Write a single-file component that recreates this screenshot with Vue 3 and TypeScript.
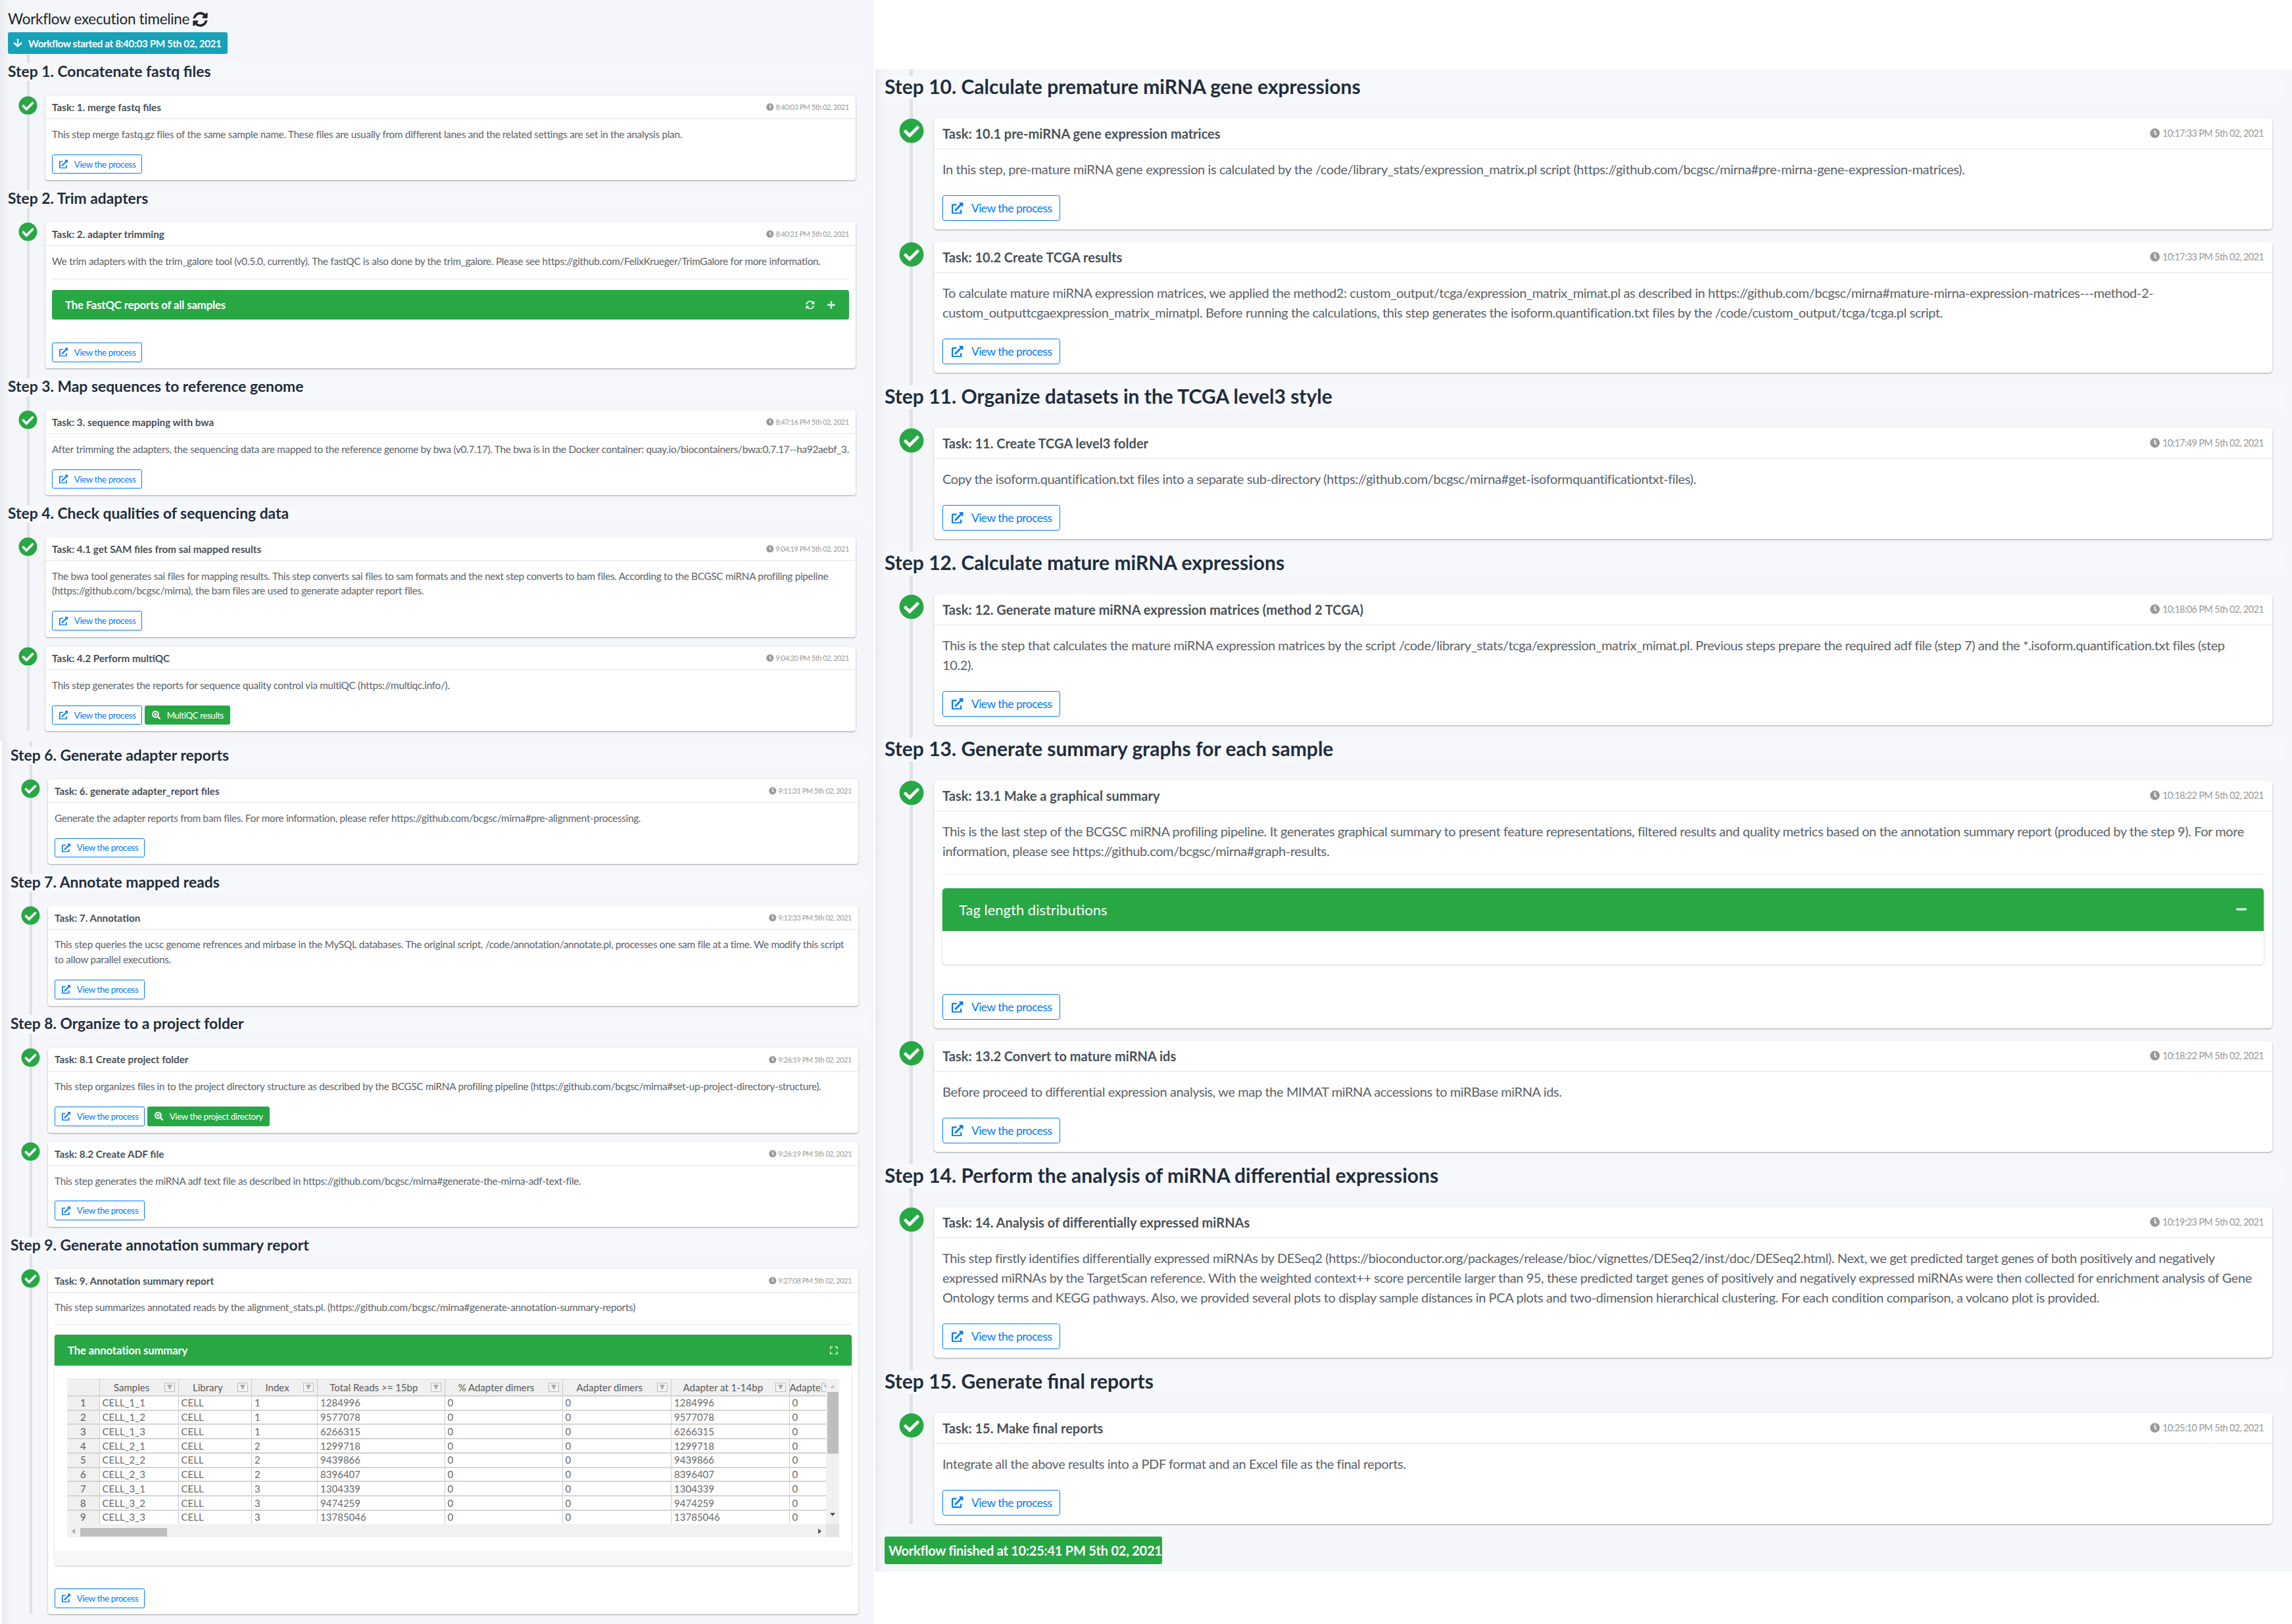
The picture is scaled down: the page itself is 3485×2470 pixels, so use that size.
<script setup lang="ts">
interface Panel { title: string; kind: 'fastqc' | 'annot' | 'tag' }
interface Task { title: string; time: string; text: string; panel?: Panel; extra?: string }
interface Step { title: string; tasks: Task[] }
interface Sheet { cls: string; steps: Step[]; intro?: boolean; end?: string }

const icons = {
  check: 'M504 256c0 136.967-111.033 248-248 248S8 392.967 8 256 119.033 8 256 8s248 111.033 248 248zM227.314 387.314l184-184c6.248-6.248 6.248-16.379 0-22.627l-22.627-22.627c-6.248-6.249-16.379-6.249-22.628 0L216 308.118l-70.059-70.059c-6.248-6.248-16.379-6.248-22.628 0l-22.627 22.627c-6.248 6.248-6.248 16.379 0 22.627l104 104c6.249 6.249 16.379 6.249 22.628.001z',
  ext: 'M432,320H400a16,16,0,0,0-16,16V448H64V128H208a16,16,0,0,0,16-16V80a16,16,0,0,0-16-16H48A48,48,0,0,0,0,112V464a48,48,0,0,0,48,48H400a48,48,0,0,0,48-48V336A16,16,0,0,0,432,320ZM488,0h-128c-21.37,0-32.05,25.91-17,41l35.73,35.73L135,320.37a24,24,0,0,0,0,34L157.67,377a24,24,0,0,0,34,0L435.28,133.32,471,169c15,15,41,4.5,41-17V24A24,24,0,0,0,488,0Z',
  sync: 'M370.72 133.28C339.458 104.008 298.888 87.962 255.848 88c-77.458.068-144.328 53.178-162.791 126.85-1.344 5.363-6.122 9.15-11.651 9.15H24.103c-7.498 0-13.194-6.807-11.807-14.176C33.933 94.924 134.813 8 256 8c66.448 0 126.791 26.136 171.315 68.685L463.03 40.97C478.149 25.851 504 36.559 504 57.941V192c0 13.255-10.745 24-24 24H345.941c-21.382 0-32.09-25.851-16.971-40.971l41.75-41.749zM32 296h134.059c21.382 0 32.09 25.851 16.971 40.971l-41.75 41.75c31.262 29.273 71.835 45.319 114.876 45.28 77.418-.07 144.315-53.144 162.787-126.849 1.344-5.363 6.122-9.15 11.651-9.15h57.304c7.498 0 13.194 6.807 11.807 14.176C478.067 417.076 377.187 504 256 504c-66.448 0-126.791-26.136-171.315-68.685L48.97 471.03C33.851 486.149 8 475.441 8 454.059V320c0-13.255 10.745-24 24-24z',
  clock: 'M256,8C119,8,8,119,8,256S119,504,256,504,504,393,504,256,393,8,256,8Zm92.49,313h0l-20,25a16,16,0,0,1-22.49,2.5h0l-67-49.72a40,40,0,0,1-15-31.23V112a16,16,0,0,1,16-16h32a16,16,0,0,1,16,16V256l58,42.5A16,16,0,0,1,348.49,321Z',
  down: 'M413.1 222.5l22.2 22.2c9.4 9.4 9.4 24.6 0 33.9L241 473c-9.4 9.4-24.6 9.4-33.9 0L12.7 278.6c-9.4-9.4-9.4-24.6 0-33.9l22.2-22.2c9.5-9.5 25-9.3 34.3.4L184 343.4V56c0-13.3 10.7-24 24-24h32c13.3 0 24 10.7 24 24v287.4l114.8-120.5c9.3-9.8 24.8-10 34.3-.4z',
  zoom: 'M304 192v32c0 6.6-5.4 12-12 12h-56v56c0 6.6-5.4 12-12 12h-32c-6.6 0-12-5.4-12-12v-56h-56c-6.6 0-12-5.4-12-12v-32c0-6.6 5.4-12 12-12h56v-56c0-6.6 5.4-12 12-12h32c6.6 0 12 5.4 12 12v56h56c6.6 0 12 5.4 12 12zm201 284.7L476.7 505c-9.4 9.4-24.6 9.4-33.9 0L343 405.3c-4.5-4.5-7-10.6-7-17V372c-35.3 27.6-79.7 44-128 44C93.1 416 0 322.9 0 208S93.1 0 208 0s208 93.1 208 208c0 48.3-16.4 92.7-44 128h16.3c6.4 0 12.5 2.5 17 7l99.7 99.7c9.3 9.4 9.3 24.6 0 34zM340 208c0-72.900-59.100-132-132-132S76 135.100 76 208s59.100 132 132 132 132-59.100 132-132z',
  plus: 'M416 208H272V64c0-17.67-14.33-32-32-32h-32c-17.67 0-32 14.33-32 32v144H32c-17.67 0-32 14.33-32 32v32c0 17.67 14.33 32 32 32h144v144c0 17.67 14.33 32 32 32h32c17.67 0 32-14.33 32-32V304h144c17.67 0 32-14.33 32-32v-32c0-17.67-14.33-32-32-32z',
  minus: 'M416 208H32c-17.67 0-32 14.33-32 32v32c0 17.67 14.33 32 32 32h384c17.67 0 32-14.33 32-32v-32c0-17.67-14.33-32-32-32z',
  expand: 'M0 180V56c0-13.3 10.7-24 24-24h124c6.6 0 12 5.4 12 12v40c0 6.6-5.4 12-12 12H64v84c0 6.6-5.4 12-12 12H12c-6.6 0-12-5.4-12-12zM288 44v40c0 6.6 5.4 12 12 12h84v84c0 6.6 5.4 12 12 12h40c6.6 0 12-5.4 12-12V56c0-13.3-10.7-24-24-24H300c-6.6 0-12 5.4-12 12zm148 276h-40c-6.6 0-12 5.4-12 12v84h-84c-6.6 0-12 5.4-12 12v40c0 6.6 5.4 12 12 12h124c13.3 0 24-10.7 24-24V332c0-6.6-5.4-12-12-12zM160 468v-40c0-6.6-5.4-12-12-12H64v-84c0-6.6-5.4-12-12-12H12c-6.6 0-12 5.4-12 12v124c0 13.3 10.7 24 24 24h124c6.6 0 12-5.4 12-12z'
}

const D = ' 5th 02, 2021'
const left: Sheet[] = [
  {
    cls: 'sheet-a',
    intro: true,
    steps: [
      { title: 'Step 1. Concatenate fastq files', tasks: [{ title: 'Task: 1. merge fastq files', time: '8:40:03 PM' + D, text: 'This step merge fastq.gz files of the same sample name. These files are usually from different lanes and the related settings are set in the analysis plan.' }] },
      { title: 'Step 2. Trim adapters', tasks: [{ title: 'Task: 2. adapter trimming', time: '8:40:21 PM' + D, text: 'We trim adapters with the trim_galore tool (v0.5.0, currently). The fastQC is also done by the trim_galore. Please see https://github.com/FelixKrueger/TrimGalore for more information.', panel: { title: 'The FastQC reports of all samples', kind: 'fastqc' } }] },
      { title: 'Step 3. Map sequences to reference genome', tasks: [{ title: 'Task: 3. sequence mapping with bwa', time: '8:47:16 PM' + D, text: 'After trimming the adapters, the sequencing data are mapped to the reference genome by bwa (v0.7.17). The bwa is in the Docker container: quay.io/biocontainers/bwa:0.7.17--ha92aebf_3.' }] },
      { title: 'Step 4. Check qualities of sequencing data', tasks: [
        { title: 'Task: 4.1 get SAM files from sai mapped results', time: '9:04:19 PM' + D, text: 'The bwa tool generates sai files for mapping results. This step converts sai files to sam formats and the next step converts to bam files. According to the BCGSC miRNA profiling pipeline\n(https://github.com/bcgsc/mirna), the bam files are used to generate adapter report files.' },
        { title: 'Task: 4.2 Perform multiQC', time: '9:04:20 PM' + D, text: 'This step generates the reports for sequence quality control via multiQC (https://multiqc.info/).', extra: 'MultiQC results' }
      ] }
    ]
  },
  {
    cls: 'sheet-b',
    steps: [
      { title: 'Step 6. Generate adapter reports', tasks: [{ title: 'Task: 6. generate adapter_report files', time: '9:11:31 PM' + D, text: 'Generate the adapter reports from bam files. For more information, please refer https://github.com/bcgsc/mirna#pre-alignment-processing.' }] },
      { title: 'Step 7. Annotate mapped reads', tasks: [{ title: 'Task: 7. Annotation', time: '9:12:33 PM' + D, text: 'This step queries the ucsc genome refrences and mirbase in the MySQL databases. The original script, /code/annotation/annotate.pl, processes one sam file at a time. We modify this script\nto allow parallel executions.' }] },
      { title: 'Step 8. Organize to a project folder', tasks: [
        { title: 'Task: 8.1 Create project folder', time: '9:26:19 PM' + D, text: 'This step organizes files in to the project directory structure as described by the BCGSC miRNA profiling pipeline (https://github.com/bcgsc/mirna#set-up-project-directory-structure).', extra: 'View the project directory' },
        { title: 'Task: 8.2 Create ADF file', time: '9:26:19 PM' + D, text: 'This step generates the miRNA adf text file as described in https://github.com/bcgsc/mirna#generate-the-mirna-adf-text-file.' }
      ] },
      { title: 'Step 9. Generate annotation summary report', tasks: [{ title: 'Task: 9. Annotation summary report', time: '9:27:08 PM' + D, text: 'This step summarizes annotated reads by the alignment_stats.pl. (https://github.com/bcgsc/mirna#generate-annotation-summary-reports)', panel: { title: 'The annotation summary', kind: 'annot' } }] }
    ]
  }
]
const right: Sheet = {
  cls: 'sheet-r',
  end: 'Workflow finished at 10:25:41 PM 5th 02, 2021',
  steps: [
    { title: 'Step 10. Calculate premature miRNA gene expressions', tasks: [
      { title: 'Task: 10.1 pre-miRNA gene expression matrices', time: '10:17:33 PM' + D, text: 'In this step, pre-mature miRNA gene expression is calculated by the /code/library_stats/expression_matrix.pl script (https://github.com/bcgsc/mirna#pre-mirna-gene-expression-matrices).' },
      { title: 'Task: 10.2 Create TCGA results', time: '10:17:33 PM' + D, text: 'To calculate mature miRNA expression matrices, we applied the method2: custom_output/tcga/expression_matrix_mimat.pl as described in https://github.com/bcgsc/mirna#mature-mirna-expression-matrices---method-2-\ncustom_outputtcgaexpression_matrix_mimatpl. Before running the calculations, this step generates the isoform.quantification.txt files by the /code/custom_output/tcga/tcga.pl script.' }
    ] },
    { title: 'Step 11. Organize datasets in the TCGA level3 style', tasks: [{ title: 'Task: 11. Create TCGA level3 folder', time: '10:17:49 PM' + D, text: 'Copy the isoform.quantification.txt files into a separate sub-directory (https://github.com/bcgsc/mirna#get-isoformquantificationtxt-files).' }] },
    { title: 'Step 12. Calculate mature miRNA expressions', tasks: [{ title: 'Task: 12. Generate mature miRNA expression matrices (method 2 TCGA)', time: '10:18:06 PM' + D, text: 'This is the step that calculates the mature miRNA expression matrices by the script /code/library_stats/tcga/expression_matrix_mimat.pl. Previous steps prepare the required adf file (step 7) and the *.isoform.quantification.txt files (step\n10.2).' }] },
    { title: 'Step 13. Generate summary graphs for each sample', tasks: [
      { title: 'Task: 13.1 Make a graphical summary', time: '10:18:22 PM' + D, text: 'This is the last step of the BCGSC miRNA profiling pipeline. It generates graphical summary to present feature representations, filtered results and quality metrics based on the annotation summary report (produced by the step 9). For more\ninformation, please see https://github.com/bcgsc/mirna#graph-results.', panel: { title: 'Tag length distributions', kind: 'tag' } },
      { title: 'Task: 13.2 Convert to mature miRNA ids', time: '10:18:22 PM' + D, text: 'Before proceed to differential expression analysis, we map the MIMAT miRNA accessions to miRBase miRNA ids.' }
    ] },
    { title: 'Step 14. Perform the analysis of miRNA differential expressions', tasks: [{ title: 'Task: 14. Analysis of differentially expressed miRNAs', time: '10:19:23 PM' + D, text: 'This step firstly identifies differentially expressed miRNAs by DESeq2 (https://bioconductor.org/packages/release/bioc/vignettes/DESeq2/inst/doc/DESeq2.html). Next, we get predicted target genes of both positively and negatively\nexpressed miRNAs by the TargetScan reference. With the weighted context++ score percentile larger than 95, these predicted target genes of positively and negatively expressed miRNAs were then collected for enrichment analysis of Gene\nOntology terms and KEGG pathways. Also, we provided several plots to display sample distances in PCA plots and two-dimension hierarchical clustering. For each condition comparison, a volcano plot is provided.' }] },
    { title: 'Step 15. Generate final reports', tasks: [{ title: 'Task: 15. Make final reports', time: '10:25:10 PM' + D, text: 'Integrate all the above results into a PDF format and an Excel file as the final reports.' }] }
  ]
}
const columns: { cls: string; sheets: Sheet[] }[] = [
  { cls: 'col-left', sheets: left },
  { cls: 'col-right', sheets: [right] }
]

const colWidths = [49, 120, 111.5, 100, 193.5, 179, 165.5, 179.5, 70]
const headers = ['Samples', 'Library', 'Index', 'Total Reads >= 15bp', '% Adapter dimers', 'Adapter dimers', 'Adapter at 1-14bp', 'Adapter at 15bp']
const rows: [string, string][] = [
  ['CELL_1_1', '1284996'], ['CELL_1_2', '9577078'], ['CELL_1_3', '6266315'],
  ['CELL_2_1', '1299718'], ['CELL_2_2', '9439866'], ['CELL_2_3', '8396407'],
  ['CELL_3_1', '1304339'], ['CELL_3_2', '9474259'], ['CELL_3_3', '13785046']
]
function indexOf(sample: string): string { return sample.charAt(5) }
function linesOf(text: string): string[] { return text.split('\n') }
</script>

<template>
  <div class="page">
    <div v-for="col in columns" :key="col.cls" :class="col.cls">
      <section v-for="sheet in col.sheets" :key="sheet.cls" class="sheet" :class="sheet.cls">
        <header v-if="sheet.intro" class="intro">
          <h1 class="page-title">
            Workflow execution timeline
            <svg class="title-icon" viewBox="0 0 512 512"><path :d="icons.sync" /></svg>
          </h1>
          <div class="start-badge">
            <svg class="badge-icon" viewBox="0 0 448 512"><path :d="icons.down" /></svg>
            <span>Workflow started at 8:40:03 PM 5th 02, 2021</span>
          </div>
        </header>
        <div class="timeline">
          <template v-for="step in sheet.steps" :key="step.title">
            <h4 class="step-title">{{ step.title }}</h4>
            <article v-for="task in step.tasks" :key="task.title" class="task">
              <svg class="pin" viewBox="0 0 512 512">
                <circle cx="256" cy="256" r="200" fill="#fff" />
                <path :d="icons.check" fill="#28a745" />
              </svg>
              <div class="task-head">
                <span class="task-title">{{ task.title }}</span>
                <span class="task-time">
                  <svg class="clock" viewBox="0 0 512 512"><path :d="icons.clock" /></svg>
                  {{ task.time }}
                </span>
              </div>
              <div class="task-body">
                <div class="task-text">
                  <p v-for="(line, i) in linesOf(task.text)" :key="i" class="task-line">{{ line }}</p>
                </div>
                <template v-if="task.panel">
                  <hr class="rule" />
                  <div class="panel" :class="'panel-' + task.panel.kind">
                    <div class="panel-head">
                      <span class="panel-title">{{ task.panel.title }}</span>
                      <span class="panel-tools">
                        <template v-if="task.panel.kind === 'fastqc'">
                          <svg class="tool" viewBox="0 0 512 512"><path :d="icons.sync" /></svg>
                          <svg class="tool" viewBox="0 0 448 512"><path :d="icons.plus" /></svg>
                        </template>
                        <svg v-else-if="task.panel.kind === 'annot'" class="tool" viewBox="0 0 448 512"><path :d="icons.expand" /></svg>
                        <svg v-else class="tool" viewBox="0 0 448 512"><path :d="icons.minus" /></svg>
                      </span>
                    </div>
                    <template v-if="task.panel.kind === 'annot'">
                      <div class="annot-body">
                        <div class="grid">
                          <div class="grid-view">
                            <table class="grid-table">
                              <colgroup><col v-for="(w, i) in colWidths" :key="i" :style="{ width: w + 'px' }" /></colgroup>
                              <thead>
                                <tr>
                                  <th class="corner"></th>
                                  <th v-for="h in headers" :key="h">
                                    <span class="th-text">{{ h }}</span>
                                    <span class="filter"></span>
                                  </th>
                                </tr>
                              </thead>
                              <tbody>
                                <tr v-for="(r, i) in rows" :key="r[0]">
                                  <th class="row-no">{{ i + 1 }}</th>
                                  <td>{{ r[0] }}</td>
                                  <td>CELL</td>
                                  <td>{{ indexOf(r[0]) }}</td>
                                  <td>{{ r[1] }}</td>
                                  <td>0</td>
                                  <td>0</td>
                                  <td>{{ r[1] }}</td>
                                  <td>0</td>
                                </tr>
                              </tbody>
                            </table>
                          </div>
                          <div class="vbar">
                            <i class="arrow-up"></i>
                            <b class="vthumb"></b>
                            <i class="arrow-down"></i>
                          </div>
                          <div class="hbar">
                            <i class="arrow-left"></i>
                            <b class="hthumb"></b>
                            <i class="arrow-right"></i>
                          </div>
                          <div class="bar-corner"></div>
                        </div>
                      </div>
                      <div class="annot-foot"></div>
                    </template>
                    <div v-else-if="task.panel.kind === 'tag'" class="tag-body"></div>
                  </div>
                </template>
                <div class="actions">
                  <button class="btn btn-line" type="button">
                    <svg class="btn-icon" viewBox="0 0 512 512"><path :d="icons.ext" /></svg>
                    View the process
                  </button>
                  <button v-if="task.extra" class="btn btn-green" type="button">
                    <svg class="btn-icon" viewBox="0 0 512 512"><path :d="icons.zoom" /></svg>
                    {{ task.extra }}
                  </button>
                </div>
              </div>
            </article>
          </template>
        </div>
        <div v-if="sheet.end" class="end-badge">{{ sheet.end }}</div>
      </section>
    </div>
  </div>
</template>

<style>
html, body { margin: 0; background: #fff; }
</style>

<style scoped>
.page {
  display: flex;
  align-items: flex-start;
  min-height: 2470px;
  background: #fff;
  font-family: Lato, "Noto Sans", sans-serif;
  color: #495057;
}
.col-left { width: 1328px; height: 2470px; display: flex; flex-direction: column; flex-shrink: 0; }
.col-right { width: 2154px; margin-left: 3px; margin-top: 105px; }
.sheet {
  background: linear-gradient(90deg, #e9ebef 0, #f4f6f9 14px);
  box-sizing: border-box;
}
.sheet-a { font-size: 15.25px; padding: 14px 12px 0; }
.sheet-b { font-size: 15.25px; padding: 0 8px 0 13px; margin-left: 3px; flex: 1; }
.sheet-r { font-size: 20px; padding: 0 10px 11px 14px; }

.page-title {
  margin: 0;
  font-size: 22.5px;
  line-height: 30px;
  font-weight: 400;
  color: #212529;
  display: flex;
  align-items: center;
  gap: 5px;
  letter-spacing: -.3px;
}
.title-icon { width: 23px; height: 23px; fill: #212529; }
.start-badge {
  width: 334px;
  height: 33px;
  box-sizing: border-box;
  margin-top: 5px;
  background: #17a2b8;
  border-radius: 3px;
  color: #fff;
  font-weight: 700;
  display: flex;
  align-items: center;
  padding-left: 8px;
  gap: 9px;
  letter-spacing: -.4px;
  white-space: nowrap;
}
.badge-icon { width: 14px; height: 15px; fill: #fff; }

.timeline { position: relative; }
.timeline::before {
  content: "";
  position: absolute;
  left: 1.9em;
  top: 0;
  bottom: 0;
  width: .26em;
  background: #dee2e6;
}
.sheet-a .timeline { padding-top: 14px; }
.sheet-b .timeline { padding-top: 9px; }
.sheet-r .timeline { padding-top: 10px; }

.step-title {
  position: relative;
  font-size: 1.5em;
  line-height: 1.1;
  padding-bottom: .1em;
  margin: 0 0 .965em;
  font-weight: 700;
  color: #1f2d3d;
  background: #f7f8fb;
  white-space: nowrap;
}

.task {
  position: relative;
  margin: 0 1em .95em 3.75em;
  background: #fff;
  border-radius: .25em;
  box-shadow: 0 1px 3px rgba(0, 0, 0, .12), 0 1px 2px rgba(0, 0, 0, .24);
}
.pin {
  position: absolute;
  left: -2.67em;
  top: 0;
  width: 1.9em;
  height: 1.9em;
}
.task-head {
  height: 2.35em;
  box-sizing: border-box;
  padding: 0 .65em;
  display: flex;
  align-items: center;
  justify-content: space-between;
  border-bottom: 1px solid #e3e5e7;
}
.task-title { font-weight: 700; color: #495057; white-space: nowrap; }
.task-time {
  font-size: .72em;
  color: #999;
  white-space: nowrap;
  display: flex;
  align-items: center;
  gap: .25em;
  letter-spacing: -.043em;
}
.clock { width: 1.05em; height: 1.05em; fill: #999; }
.task-body { padding: .75em .65em .65em; }
.task-text {
  margin: 0 0 1.25em;
  color: #5c6268;
}
.task-line {
  margin: 0;
  line-height: 1.5;
  white-space: nowrap;
}
.sheet-a .task-line, .sheet-b .task-line { letter-spacing: -.017em; }
.sheet-r .task-line { letter-spacing: -.02em; }
.rule { border: 0; border-top: 1px solid #e6e8ea; margin: 1em 0 1.05em; }
.sheet-b .rule { margin: .9em 0 1em; }
.task-text:has(+ .rule) { margin-bottom: 0; }
.panel {
  border-radius: .25em;
  box-shadow: 0 0 1px rgba(0, 0, 0, .125), 0 1px 3px rgba(0, 0, 0, .2);
  margin-bottom: 2.25em;
  overflow: hidden;
  background: #fff;
}
.panel-fastqc { box-shadow: none; }
.panel-head {
  height: 3.1em;
  box-sizing: border-box;
  background: #28a745;
  color: #fff;
  display: flex;
  align-items: center;
  justify-content: space-between;
  padding: 0 1.3em;
}
.panel-fastqc .panel-head { height: 3em; }
.panel-title { font-weight: 700; white-space: nowrap; font-size: 1.1em; letter-spacing: -.01em; }
.panel-tag .panel-head { height: 3.25em; padding: 0 1.25em; }
.panel-tag .panel-title { font-weight: 400; letter-spacing: 0; }
.panel-tools { display: flex; align-items: center; gap: 1.2em; }
.tool { width: .9em; height: .9em; fill: #d6f0dc; }
.tag-body { height: 2.55em; }
.annot-body { padding: 20px 20px 20px 19px; }
.annot-foot { height: 23px; background: #f7f7f7; }

.grid {
  display: grid;
  grid-template-columns: 1154px 20px;
  grid-template-rows: 221px 20px;
  height: 241px;
  font-size: 15px;
}
.grid-view { overflow: hidden; }
.grid-table {
  table-layout: fixed;
  border-collapse: collapse;
  width: 1168px;
  color: #6a6a6a;
}
.grid-table th, .grid-table td {
  box-sizing: border-box;
  border-right: 1px solid #ccc;
  border-bottom: 2px solid #d4d4d4;
  padding: 0 0 0 4px;
  height: 21.75px;
  line-height: 19px;
  font-weight: 400;
  text-align: left;
  white-space: nowrap;
  overflow: hidden;
}
.grid-table thead th {
  position: relative;
  height: 25px;
  background: #f0f0f0;
  color: #5a5a5a;
  text-align: center;
  padding: 0 22px 0 0;
  border-top: 1px solid #ddd;
}
.grid-table th.row-no { background: #f0f0f0; text-align: center; padding: 0; color: #5a5a5a; }
.filter {
  position: absolute;
  right: 5px;
  top: 5px;
  width: 16px;
  height: 14px;
  box-sizing: border-box;
  border: 1px solid #bbb;
  background: #f4f4f4;
}
.filter::after {
  content: "";
  position: absolute;
  left: 3px;
  top: 2px;
  border-left: 4px solid transparent;
  border-right: 4px solid transparent;
  border-top: 8px solid #aaa;
}
.vbar { position: relative; background: #f1f1f1; }
.hbar { position: relative; background: #f1f1f1; grid-column: 1; }
.bar-corner { background: #e4e4e4; }
.vthumb { position: absolute; left: 2px; right: 1px; top: 20px; height: 94px; background: #bebebe; }
.hthumb { position: absolute; left: 20px; top: 6px; bottom: 1px; width: 132px; background: #bebebe; }
.arrow-up, .arrow-down, .arrow-left, .arrow-right { position: absolute; width: 0; height: 0; }
.arrow-up { left: 6px; top: 9px; border: 4px solid transparent; border-top: 0; border-bottom: 5px solid #c6c6c6; }
.arrow-down { left: 6px; bottom: 12px; border: 4px solid transparent; border-bottom: 0; border-top: 5px solid #505050; }
.arrow-left { left: 7px; top: 7px; border: 4px solid transparent; border-left: 0; border-right: 5px solid #a8a8a8; }
.arrow-right { right: 7px; top: 7px; border: 4px solid transparent; border-right: 0; border-left: 5px solid #505050; }

.actions { display: flex; gap: .27em; }
.btn {
  height: 2.23em;
  box-sizing: border-box;
  font: inherit;
  font-size: .875em;
  border-radius: .2em;
  display: inline-flex;
  align-items: center;
  gap: .7em;
  padding: 0 .65em 0 .75em;
  white-space: nowrap;
  letter-spacing: -.03em;
}
.btn-line { background: #fff; border: 1px solid #007bff; color: #007bff; }
.btn-green { background: #28a745; border: 1px solid #28a745; color: #fff; }
.btn-icon { width: 1em; height: 1em; fill: currentColor; }
.end-badge {
  width: 422px;
  height: 42px;
  box-sizing: border-box;
  background: #28a745;
  color: #fff;
  font-weight: 700;
  border-radius: 3px;
  display: flex;
  align-items: center;
  padding-left: 6px;
  white-space: nowrap;
  letter-spacing: -.012em;
}
</style>
